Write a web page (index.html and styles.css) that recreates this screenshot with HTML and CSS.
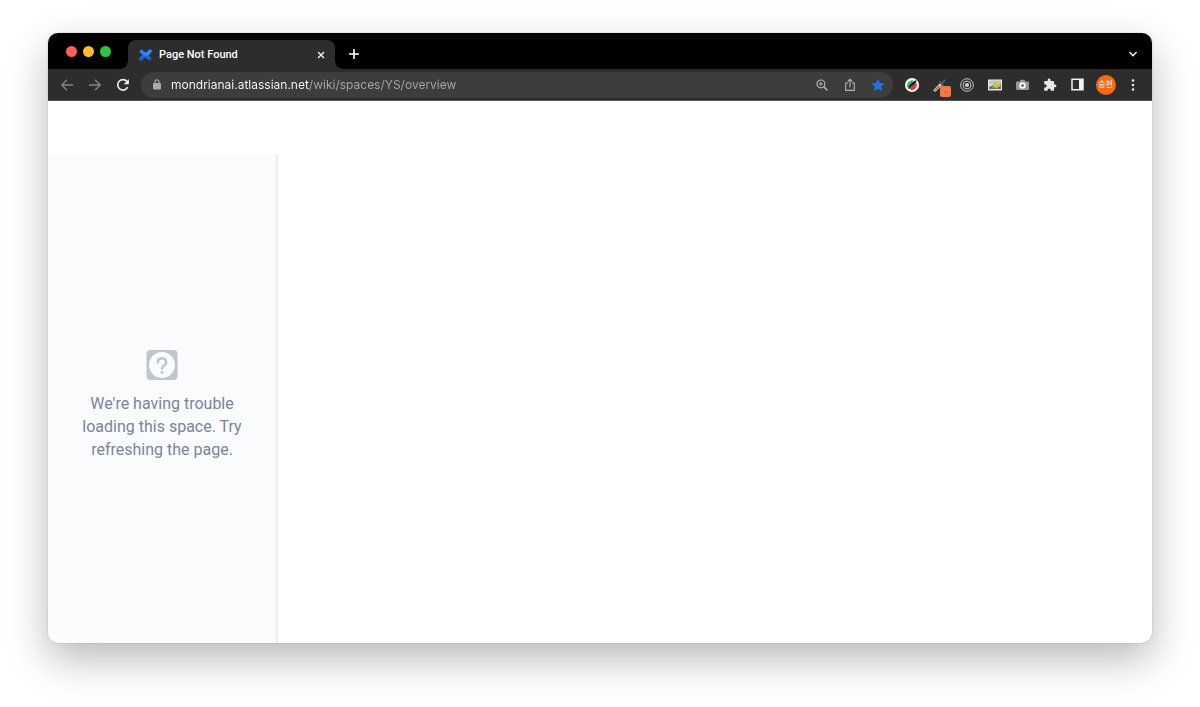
FILE: index.html
```html
<!DOCTYPE html>
<html lang="en">
<head>
    <meta charset="UTF-8">
    <meta name="viewport" content="width=device-width, initial-scale=1.0">
    <title>Page Not Found</title>
    <link rel="stylesheet" href="styles.css">
</head>
<body>
    <div class="window">
        <header class="tab-strip">
            <div class="lights">
                <span class="light red"></span>
                <span class="light yellow"></span>
                <span class="light green"></span>
            </div>
            <div class="tab">
                <svg class="favicon" width="15" height="14" viewBox="0 0 15 14">
                    <path d="M2.2 12.2C5 6.6 7.4 6.4 12.6 11.6" fill="none" stroke="#1c63d8" stroke-width="3.6"/>
                    <path d="M12.8 1.8C10 7.4 7.6 7.6 2.4 2.4" fill="none" stroke="#2d84ff" stroke-width="3.6"/>
                </svg>
                <span class="tab-title">Page Not Found</span>
                <button class="tab-close" aria-label="Close tab">
                    <svg width="8" height="8" viewBox="0 0 8 8"><path d="M1 1l6 6M7 1L1 7" stroke="#fff" stroke-width="1.3"/></svg>
                </button>
            </div>
            <button class="new-tab" aria-label="New tab">
                <svg width="12" height="12" viewBox="0 0 12 12"><path d="M6 1v10M1 6h10" stroke="#fff" stroke-width="1.6"/></svg>
            </button>
            <button class="tab-search" aria-label="Search tabs">
                <svg width="10" height="8" viewBox="0 0 10 8"><path d="M1.4 2L5 5.6 8.6 2" fill="none" stroke="#e8e8e8" stroke-width="1.6"/></svg>
            </button>
        </header>

        <div class="toolbar">
            <nav class="nav">
                <button aria-label="Back">
                    <svg width="14" height="14" viewBox="0 0 14 14"><path d="M13 7H2M7 1.8L1.8 7 7 12.2" fill="none" stroke="#858585" stroke-width="1.3"/></svg>
                </button>
                <button aria-label="Forward">
                    <svg width="14" height="14" viewBox="0 0 14 14"><path d="M1 7h11M7 1.8L12.2 7 7 12.2" fill="none" stroke="#858585" stroke-width="1.3"/></svg>
                </button>
                <button aria-label="Reload">
                    <svg width="14" height="14" viewBox="0 0 14 14"><path d="M11.6 9.2A5.2 5.2 0 1 1 11 3.6" fill="none" stroke="#eee" stroke-width="1.6"/><path d="M12.9 1v5.2H7.7z" fill="#eee"/></svg>
                </button>
            </nav>

            <div class="omnibox">
                <svg class="lock" width="8" height="11" viewBox="0 0 8 11"><rect y="4" width="8" height="6.5" rx="1" fill="#aaa"/><path d="M2 4.5V2.8a2 2 0 0 1 4 0v1.7" fill="none" stroke="#aaa" stroke-width="1.2"/></svg>
                <input class="address" type="text" aria-label="Address" value="mondrianai.atlassian.net/wiki/spaces/YS/overview">
                <button aria-label="Zoom">
                    <svg width="12" height="12" viewBox="0 0 12 12"><circle cx="4.9" cy="4.9" r="3.9" fill="none" stroke="#b5b5b5" stroke-width="1.2"/><path d="M7.8 7.8l3.6 3.6" stroke="#b5b5b5" stroke-width="1.5"/><path d="M4.9 3v3.8M3 4.9h3.8" stroke="#b5b5b5"/></svg>
                </button>
                <button aria-label="Share">
                    <svg width="12" height="14" viewBox="0 0 12 14"><path d="M4 5H1.7v7.4h8.6V5H8" fill="none" stroke="#b5b5b5" stroke-width="1.1"/><path d="M6 9.5V1.6M3.7 3.7L6 1.4l2.3 2.3" fill="none" stroke="#b5b5b5" stroke-width="1.1"/></svg>
                </button>
                <button aria-label="Bookmark">
                    <svg width="14" height="14" viewBox="0 0 14 14"><path d="M7 .7l1.9 4.2 4.6.5-3.4 3.1.9 4.6L7 10.7l-4 2.4.9-4.6L.5 5.4l4.6-.5z" fill="#2174e5"/></svg>
                </button>
            </div>

            <div class="extensions">
                <button aria-label="Feather">
                    <svg width="14" height="14" viewBox="0 0 14 14"><circle cx="7" cy="7" r="7" fill="#fff"/><path d="M2 8.6C1.6 5.4 4 2.4 8.4 2L5.4 7.6 3 10z" fill="#20c05c"/><path d="M11.8 5c.8 3.8-1.6 6.8-5.4 7.2L4.4 10l4.4-3z" fill="#f0323c"/><path d="M3 10.4C4.6 6.6 7.6 3.4 11.6 2c-.2 3-2 4.8-4.6 6L3.8 11z" fill="#161616"/></svg>
                </button>
                <button class="picker" aria-label="Color picker">
                    <svg width="14" height="14" viewBox="0 0 14 14"><path d="M2 12.2L8.2 6" stroke="#e9d5cf" stroke-width="2.8" stroke-linecap="round"/><path d="M2.1 12.1L6 8.2" stroke="#b85546" stroke-width="1.3" stroke-linecap="round"/><path d="M7.2 4.2l2.6 2.6M9 5l2.5-2.5" stroke="#555" stroke-width="2.4" stroke-linecap="round"/></svg>
                    <span class="badge">..</span>
                </button>
                <button aria-label="Target">
                    <svg width="14" height="14" viewBox="0 0 14 14"><g fill="none" stroke="#c8c8c8"><circle cx="7" cy="7" r="6.3"/><circle cx="7" cy="7" r="3.9"/></g><circle cx="7" cy="7" r="2.1" fill="#ccc"/></svg>
                </button>
                <button aria-label="Image tools">
                    <svg width="14" height="12" viewBox="0 0 14 12"><rect y=".5" width="14" height="11" fill="#e6e6e6"/><path d="M1 1.5h12v4H1z" fill="#b9c9ca"/><path d="M1 10V8l4-2 4 1 4-2v5z" fill="#667267"/><path d="M6 2l2 2 3-2-1 3 3 2-3 1-1 2-2-2-3 1 2-3z" fill="#d8bd40"/></svg>
                </button>
                <button aria-label="Screenshot">
                    <svg width="13" height="12" viewBox="0 0 13 12"><path d="M1.2 2.5h2.4L4.7.8h3.6l1.1 1.7h2.4q1.2 0 1.2 1.2v6.1q0 1.2-1.2 1.2H1.2Q0 11 0 9.8V3.7Q0 2.5 1.2 2.5z" fill="#989898"/><circle cx="6.5" cy="6.5" r="3.2" fill="#fff"/><circle cx="6.5" cy="6.5" r="1.6" fill="#777"/></svg>
                </button>
                <button aria-label="Extensions">
                    <svg width="14" height="14" viewBox="0 0 24 24"><path d="M20.5 11H19V7a2 2 0 0 0-2-2h-4V3.5a2.5 2.5 0 0 0-5 0V5H4a2 2 0 0 0-2 2v3.8h1.5a2.7 2.7 0 0 1 0 5.4H2V20a2 2 0 0 0 2 2h3.8v-1.5a2.7 2.7 0 0 1 5.4 0V22H17a2 2 0 0 0 2-2v-4h1.5a2.5 2.5 0 0 0 0-5z" fill="#e8e8e8"/></svg>
                </button>
                <button aria-label="Side panel">
                    <svg width="13" height="13" viewBox="0 0 13 13"><path d="M1 1.2h11v10.6H1z" fill="none" stroke="#f2f2f2" stroke-width="1.5"/><path d="M8 1h4v11H8z" fill="#f2f2f2"/></svg>
                </button>
                <button aria-label="Profile"><span class="avatar">승현</span></button>
                <button aria-label="Menu">
                    <svg width="4" height="14" viewBox="0 0 4 14"><g fill="#e8e8e8"><circle cx="2" cy="2.5" r="1.3"/><circle cx="2" cy="7" r="1.3"/><circle cx="2" cy="11.5" r="1.3"/></g></svg>
                </button>
            </div>
        </div>

        <div class="page">
            <aside class="sidebar">
                <svg width="32" height="32" viewBox="0 0 32 32">
                    <rect x=".5" y="1" width="31" height="30" rx="4" fill="#bfc4ce"/>
                    <circle cx="16" cy="16" r="13" fill="#fafbfd"/>
                    <path d="M11.9 13.4a4.1 4 0 1 1 6.1 3.3c-1.5.8-2 1.4-2 2.9" fill="none" stroke="#bfc4ce" stroke-width="2.5" stroke-linecap="round"/>
                    <circle cx="16" cy="23.4" r="1.5" fill="#bfc4ce"/>
                </svg>
                <p>We're having trouble loading this space. Try refreshing the page.</p>
            </aside>
            <main class="content"></main>
        </div>
    </div>
</body>
</html>
```
FILE: styles.css
```css
* {
    box-sizing: border-box;
}

body {
    display: flex;
    min-height: 100vh;
    margin: 0;
    padding: 33px 48px 64px;
    background: #fff;
    font-family: Roboto, "Noto Sans CJK KR", sans-serif;
}

button {
    display: flex;
    align-items: center;
    justify-content: center;
    padding: 0;
    border: none;
    background: none;
    font-family: inherit;
    cursor: pointer;
}

svg {
    display: block;
    flex: none;
}

.window {
    display: flex;
    flex: 1;
    flex-direction: column;
    min-width: 0;
    overflow: hidden;
    border-radius: 10px;
    background: #fff;
    box-shadow: 0 0 1px rgba(0, 0, 0, 0.5), 0 16px 40px rgba(0, 0, 0, 0.28);
}

/* tabs */
.tab-strip {
    display: flex;
    height: 36px;
    padding: 0 5px 0 18px;
    background: #000;
}

.lights {
    display: flex;
    align-items: center;
    gap: 6px;
    width: 62px;
}

.light {
    width: 11px;
    height: 11px;
    border-radius: 50%;
}

.red { background: #ff5f57; }
.yellow { background: #febc2e; }
.green { background: #28c840; }

.tab {
    position: relative;
    display: flex;
    align-items: center;
    width: 207px;
    margin-top: 7px;
    padding: 0 8px 0 10px;
    border-radius: 8px 8px 0 0;
    background: #2d2d2d;
}

/* curved feet of the tab */
.tab::before,
.tab::after {
    content: "";
    position: absolute;
    bottom: 0;
    width: 7px;
    height: 7px;
}

.tab::before {
    right: 100%;
    background: radial-gradient(circle at 0 0, #000 6px, #2d2d2d 7px);
}

.tab::after {
    left: 100%;
    background: radial-gradient(circle at 100% 0, #000 6px, #2d2d2d 7px);
}

.tab-title {
    flex: 1;
    margin-left: 6px;
    color: #fff;
    font-size: 11px;
    font-weight: 500;
    line-height: 16px;
}

.tab-close {
    width: 12px;
    height: 16px;
}

.new-tab,
.tab-search {
    width: 28px;
    height: 28px;
    margin-top: 7px;
}

.new-tab {
    margin-left: 5px;
}

.tab-search {
    margin-left: auto;
}

/* toolbar */
.toolbar {
    display: flex;
    align-items: center;
    height: 32px;
    padding: 0 5px;
    border-bottom: 1px solid #555;
    background: #2d2d2d;
}

.nav {
    display: flex;
    margin-right: 4px;
}

.nav button,
.omnibox button {
    width: 28px;
    height: 26px;
}

.omnibox {
    display: flex;
    flex: 1;
    align-items: center;
    height: 26px;
    min-width: 0;
    padding: 0 1px 0 12px;
    border-radius: 13px;
    background: #3d3d3d;
}

.address {
    flex: 1;
    min-width: 0;
    height: 20px;
    margin-left: 10px;
    padding: 0;
    border: none;
    outline: none;
    /* white host name, grey path */
    background: linear-gradient(to right, #fff 138px, #a8a8a8 138px);
    background-clip: text;
    -webkit-background-clip: text;
    color: transparent;
    font-family: Inter, sans-serif;
    font-size: 12px;
}

.extensions {
    display: flex;
    width: 249px;
    margin-left: 5px;
}

.extensions button {
    flex: 1;
    height: 26px;
}

.picker {
    position: relative;
}

.badge {
    position: absolute;
    right: 2px;
    bottom: 1px;
    width: 11px;
    height: 11px;
    border-radius: 2px;
    background: #f47b3e;
    color: #7a3210;
    font-size: 8px;
    line-height: 10px;
}

.avatar {
    width: 20px;
    height: 20px;
    border-radius: 50%;
    background: #f26a1b;
    color: #fff;
    font-size: 8px;
    line-height: 20px;
}

/* page */
.page {
    display: flex;
    flex: 1;
    padding-top: 53px;
}

.sidebar {
    display: flex;
    flex-direction: column;
    align-items: center;
    justify-content: center;
    width: 230px;
    padding: 12px 32px 0;
    border-right: 2px solid #ebecf0;
    background: #fafbfd;
}

.sidebar p {
    margin: 11px 0 0;
    color: #7a8499;
    font-size: 16px;
    line-height: 23px;
    text-align: center;
}

.content {
    flex: 1;
}
```
